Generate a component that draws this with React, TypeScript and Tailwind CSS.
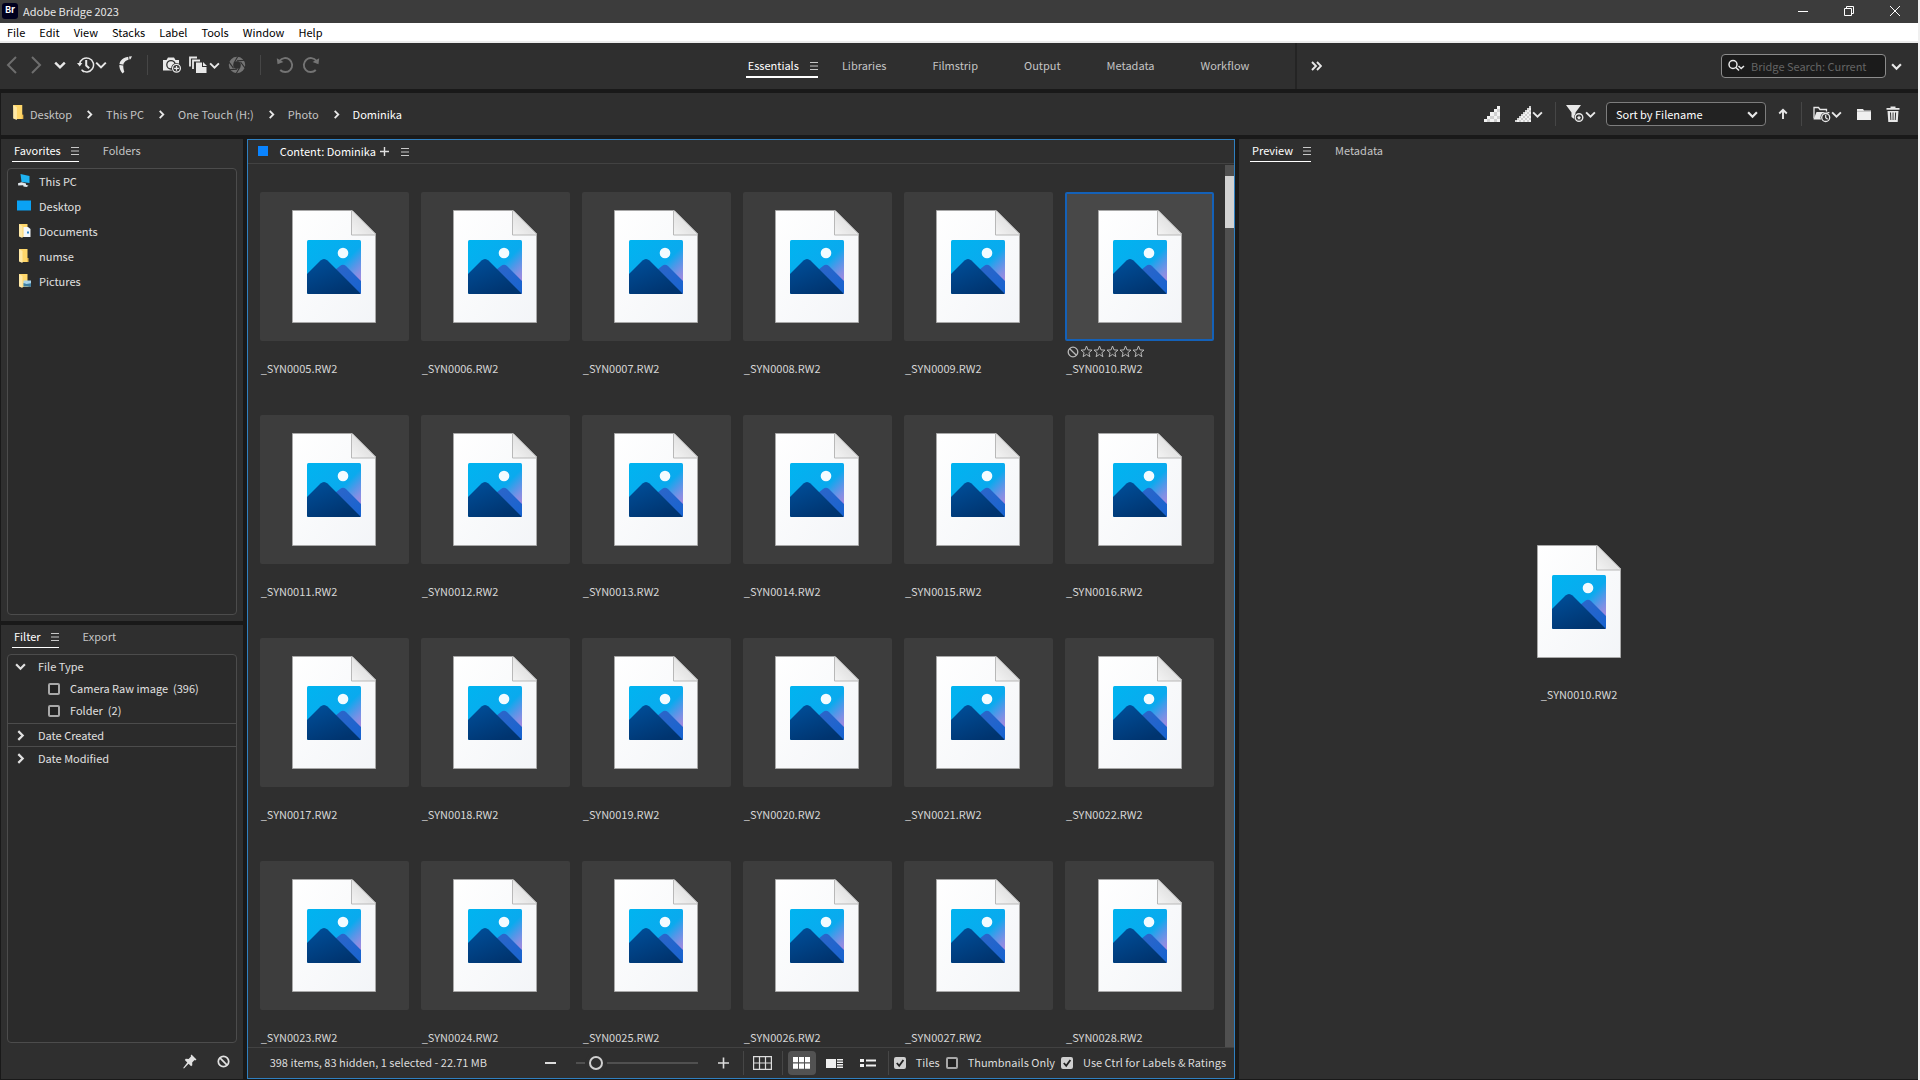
import { useState, type ReactNode } from 'react';

const FIRST_FILE = 5;
const FILES = Array.from({ length: 24 }, (_, i) => `_SYN${String(FIRST_FILE + i).padStart(4, '0')}.RW2`);
const MENUS = ['File', 'Edit', 'View', 'Stacks', 'Label', 'Tools', 'Window', 'Help'];
const WORKSPACES = ['Libraries', 'Filmstrip', 'Output', 'Metadata', 'Workflow'];
const CRUMBS = ['Desktop', 'This PC', 'One Touch (H:)', 'Photo', 'Dominika'];

/* ---------- icons ---------- */

type Dir = 'left' | 'right' | 'down';

function Chevron({ dir = 'down', size = 10, weight = 2 }: { dir?: Dir; size?: number; weight?: number }) {
  const d = { down: 'M1 3l4 4 4-4', right: 'M3 1l4 4-4 4', left: 'M7 1L3 5l4 4' }[dir];
  return (
    <svg width={size} height={size} viewBox="0 0 10 10" fill="none" stroke="currentColor" strokeWidth={weight} className="shrink-0" aria-hidden="true">
      <path d={d} />
    </svg>
  );
}

function BigChevron({ dir }: { dir: 'left' | 'right' }) {
  return (
    <svg width="12" height="18" viewBox="0 0 12 18" fill="none" stroke="currentColor" strokeWidth="2" aria-hidden="true">
      <path d={dir === 'left' ? 'M10 1L2 9l8 8' : 'M2 1l8 8-8 8'} />
    </svg>
  );
}

function Lines() {
  return (
    <svg width="8" height="8" viewBox="0 0 8 8" fill="#c8c8c8" className="shrink-0" aria-hidden="true">
      <path d="M0 0h8v1H0zM0 3.5h8v1H0zM0 7h8v1H0z" />
    </svg>
  );
}

function Ban({ size = 12, weight = 1.6 }: { size?: number; weight?: number }) {
  return (
    <svg width={size} height={size} viewBox="0 0 12 12" fill="none" stroke="currentColor" strokeWidth={weight} aria-hidden="true">
      <circle cx="6" cy="6" r="4.8" />
      <path d="M2.7 2.7l6.6 6.6" />
    </svg>
  );
}

function Star() {
  return (
    <svg width="13" height="13" viewBox="0 0 13 13" fill="none" stroke="currentColor" strokeWidth="1" aria-hidden="true">
      <path d="M6.5 1l1.5 3.9 4 .2-3.1 2.6 1 4-3.4-2.3-3.4 2.3 1-4L1 5.1l4-.2z" />
    </svg>
  );
}

function HistoryIcon() {
  return (
    <svg width="18" height="18" viewBox="0 0 18 18" fill="none" stroke="currentColor" strokeWidth="1.5" aria-hidden="true">
      <path d="M2.6 8A7 7 0 1 1 4.5 13.8" />
      <path d="M5.5 15a7 7 0 0 0 1.5.8" />
      <path d="M0 7h5.4L2.7 10.4z" fill="currentColor" stroke="none" />
      <path d="M9.2 4v5.5l3 2.8" strokeWidth="2" />
    </svg>
  );
}

function BoomerangIcon() {
  return (
    <svg width="16" height="18" viewBox="0 0 16 18" fill="currentColor" aria-hidden="true">
      <path d="M2.500 7.500C4 3 8 .8 15 .3l-1.500 2.900C9.500 3.800 6.800 5.600 6.300 9c-.2 2.600.3 4.700 1 6.800L5.600 17.600C3.400 14.800 1.700 11.500 2.500 7.500z" />
      <path d="M11.500 0l.7 4.500M1.700 8.300l5 .9" stroke="#2f2f2f" strokeWidth=".9" />
    </svg>
  );
}

function CameraPlusIcon() {
  return (
    <svg width="20" height="18" viewBox="0 0 20 18" aria-hidden="true">
      <path d="M1 4h3.5l1.5-2.5h6L13.500 4H17v10.500H1z" fill="currentColor" />
      <circle cx="9" cy="8.800" r="4.200" fill="currentColor" stroke="#2f2f2f" strokeWidth="1.3" />
      <circle cx="14.500" cy="12.300" r="5.300" fill="#2f2f2f" />
      <circle cx="14.500" cy="12.300" r="3.900" fill="#2f2f2f" stroke="currentColor" strokeWidth="1.3" />
      <path d="M14.500 9.900v4.800M12.100 12.300h4.800" stroke="currentColor" strokeWidth="1.3" />
    </svg>
  );
}

function StackIcon() {
  return (
    <svg width="18" height="18" viewBox="0 0 18 18" aria-hidden="true">
      <path d="M1 10.500V1.500h7M4 13V4.500h7" fill="none" stroke="currentColor" strokeWidth="1.8" />
      <path d="M7 6.500h6V11h4.500v6H7z" fill="currentColor" />
      <path d="M14 6l4 4h-4z" fill="currentColor" />
    </svg>
  );
}

function ApertureIcon() {
  return (
    <svg width="18" height="18" viewBox="0 0 18 18" aria-hidden="true">
      <circle cx="9" cy="9" r="6" fill="none" stroke="currentColor" strokeWidth="4.400" />
      <path d="M9.800.5L6 7M16.600 4.200L9 4.900M17 11.800L12.500 6M8.200 17.500L12 11M1.500 13.800l7.500-.7M1 6.200l4.500 6" stroke="#2f2f2f" strokeWidth="1.100" />
    </svg>
  );
}

function RotateIcon({ flip = false }: { flip?: boolean }) {
  return (
    <svg width="18" height="18" viewBox="0 0 18 18" fill="none" stroke="currentColor" strokeWidth="1.9" aria-hidden="true">
      <g transform={flip ? 'translate(18 0) scale(-1 1)' : undefined}>
        <path d="M3.600 4.800A7 7 0 1 1 4.200 14" />
        <path d="M.8 2.200l6.700 3.700L1.500 8.300z" fill="currentColor" stroke="none" />
      </g>
    </svg>
  );
}

function StairsIcon({ fine = false }: { fine?: boolean }) {
  const n = fine ? 8 : 5;
  const s = 15 / n;
  const cells: ReactNode[] = [];
  for (let r = 0; r < n; r++)
    for (let c = n - 1 - r; c < n; c++)
      cells.push(<rect key={`${r}-${c}`} x={c * s} y={r * s} width={s} height={s} fill={(r + c) % 2 ? '#cfcfcf' : '#f2f2f2'} />);
  return (
    <svg width="16" height="16" viewBox="0 0 15 15" shapeRendering="crispEdges" aria-hidden="true">
      {cells}
    </svg>
  );
}

function FunnelIcon() {
  return (
    <svg width="18" height="18" viewBox="0 0 18 18" aria-hidden="true">
      <path d="M0 0h15L9.500 7.500V15L5.500 12V7.500z" fill="currentColor" />
      <circle cx="13" cy="12.500" r="5" fill="#2f2f2f" />
      <circle cx="13" cy="12.500" r="3.800" fill="none" stroke="currentColor" strokeWidth="1.4" />
      <path d="M13 10.300l.7 1.500 1.600.2-1.200 1.100.3 1.600-1.400-.8-1.400.8.3-1.600-1.200-1.100 1.600-.2z" fill="currentColor" />
    </svg>
  );
}

function FolderClockIcon() {
  return (
    <svg width="18" height="17" viewBox="0 0 18 17" aria-hidden="true">
      <path d="M1 12.500V1.500h4.500l1.500 2h6.500v2" fill="none" stroke="currentColor" strokeWidth="1.3" />
      <path d="M.5 13.500L3.500 6h13l-2 7.500z" fill="currentColor" />
      <circle cx="12.700" cy="11.500" r="5.200" fill="#2f2f2f" />
      <circle cx="12.700" cy="11.500" r="4" fill="none" stroke="currentColor" strokeWidth="1.3" />
      <path d="M12.700 8.900v2.800l2 1.500" fill="none" stroke="currentColor" strokeWidth="1.2" />
    </svg>
  );
}

function TrashIcon() {
  return (
    <svg width="14" height="16" viewBox="0 0 14 16" fill="currentColor" aria-hidden="true">
      <path d="M4.500 2V.5h5V2h4v1.800H.5V2z" />
      <path d="M1.500 5h11l-.8 11H2.300zM4 6.500l.4 7.500h.9L5 6.500zm2.600 0V14h.9V6.500zm2.500 0L8.800 14h.9l.4-7.500z" fillRule="evenodd" />
    </svg>
  );
}

function YellowFolder({ children, size = 14 }: { children?: ReactNode; size?: number }) {
  return (
    <svg width={size} height={size} viewBox="0 0 14 14" aria-hidden="true">
      <path d="M2 0h8.500v13H4z" fill="#ffd76a" />
      <path d="M10 9h1.500v4H10z" fill="#f0bd4a" />
      <path d="M2 0l3.500 2v12L2 12.500z" fill="#ffe9a6" />
      {children}
    </svg>
  );
}

function PinIcon() {
  return (
    <svg width="14" height="15" viewBox="0 0 14 15" fill="currentColor" aria-hidden="true">
      <path d="M8.500.5l5 5-1.300.9-.7-.3-2.300 2.400.1 2.800-1.200 1-2.500-2.500L1 14.500l-.8-.6L4.300 8.500 1.800 6l1-1.200 2.800.1L8 2.600l-.3-.9z" />
    </svg>
  );
}

/* Document page with a picture badge, used for files without a rendered thumbnail. */
function ImageFileIcon() {
  return (
    <svg width="84" height="113" viewBox="0 0 84 113" role="img" aria-label="Image file">
      <defs>
        <linearGradient id="page" x1="0" y1="0" x2="1" y2="1">
          <stop offset="0" stopColor="#ffffff" />
          <stop offset="1" stopColor="#f3f5f8" />
        </linearGradient>
        <linearGradient id="fold" x1="0" y1="1" x2="1" y2="0">
          <stop offset="0" stopColor="#f4f4f4" />
          <stop offset="1" stopColor="#d2d2d2" />
        </linearGradient>
        <linearGradient id="sky" x1="0" y1="0" x2="1" y2="1">
          <stop offset="0" stopColor="#00b4f0" />
          <stop offset=".55" stopColor="#0aaaee" />
          <stop offset=".68" stopColor="#5596e8" />
          <stop offset=".77" stopColor="#8090e4" />
          <stop offset=".86" stopColor="#a08adf" />
        </linearGradient>
        <linearGradient id="near" x1="0" y1="0" x2=".6" y2="1">
          <stop offset="0" stopColor="#00509c" />
          <stop offset="1" stopColor="#00346f" />
        </linearGradient>
        <linearGradient id="far" x1="0" y1="0" x2="1" y2="1">
          <stop offset="0" stopColor="#2f66c8" />
          <stop offset="1" stopColor="#1763d0" />
        </linearGradient>
        <clipPath id="badge">
          <rect x="15" y="30" width="54" height="54" rx="1.5" />
        </clipPath>
      </defs>
      <path d="M.5.5H60L83.500 24v88.500H.5z" fill="url(#page)" stroke="#a8a8a8" />
      <path d="M60 .8V25h23z" fill="url(#fold)" />
      <path d="M59.500 1v24h24" fill="none" stroke="#b8b8b8" strokeWidth="1" />
      <path d="M60 .5L83.500 24" stroke="#d8d8d8" />
      <g clipPath="url(#badge)">
        <rect x="15" y="30" width="54" height="54" fill="url(#sky)" />
        <path d="M38 64L48 56q3-2.500 6 0L69 71v13H45z" fill="url(#far)" />
        <path d="M15 64L28.500 50.500q3.500-3 7 0L69 84H15z" fill="url(#near)" />
      </g>
      <circle cx="51" cy="43" r="5.300" fill="#f3fbff" />
    </svg>
  );
}

/* ---------- small building blocks ---------- */

function Divider({ className }: { className: string }) {
  return <span className={`w-px shrink-0 bg-[#464646] ${className}`} />;
}

function PanelTabs({ active, other }: { active: string; other: string }) {
  return (
    <div role="tablist" className="flex h-[23px] shrink-0 items-stretch pl-[11px]">
      <div className="flex items-center gap-2.5 border-b border-white pl-0.5">
        <button type="button" role="tab" aria-selected="true" className="text-white">{active}</button>
        <button type="button" aria-label={`${active} panel menu`} className="pt-0.5"><Lines /></button>
      </div>
      <button type="button" role="tab" aria-selected="false" className="ml-6 border-b border-transparent text-[#c4c4c4]">{other}</button>
    </div>
  );
}

function Check({ label, checked = false }: { label: ReactNode; checked?: boolean }) {
  const [on, setOn] = useState(checked);
  return (
    <label className="flex items-center gap-2.5 whitespace-nowrap">
      <span className="grid size-3 shrink-0 place-items-center">
        <input
          type="checkbox"
          checked={on}
          onChange={(e) => setOn(e.target.checked)}
          className="peer size-3 appearance-none rounded-[2px] border-2 border-[#a8a8a8] bg-[#222222] [grid-area:1/1] checked:border-[#d0d0d0] checked:bg-[#d0d0d0]"
        />
        <svg width="10" height="10" viewBox="0 0 10 10" fill="none" stroke="#222222" strokeWidth="1.8" className="pointer-events-none hidden [grid-area:1/1] peer-checked:block" aria-hidden="true">
          <path d="M1.800 5l2.400 2.800L8.400 2" />
        </svg>
      </span>
      <span className="pb-0.5 whitespace-pre">{label}</span>
    </label>
  );
}

/* ---------- page sections ---------- */

function TitleBar() {
  return (
    <header className="flex h-[23px] shrink-0 items-center bg-[#3c3c3c] pb-0.5 pl-0.5 text-[#e6e6e6]">
      <span className="flex size-4 items-center justify-center rounded-[3px] bg-[#00001e] pb-px text-[9px] leading-4 font-bold text-white">Br</span>
      <h1 className="ml-[5px]">Adobe Bridge 2023</h1>
      <div className="ml-auto flex items-center gap-9 pr-[18px] text-white">
        <button type="button" aria-label="Minimize">
          <svg width="10" height="10" viewBox="0 0 10 10" stroke="currentColor"><path d="M0 5.500h10" /></svg>
        </button>
        <button type="button" aria-label="Restore">
          <svg width="10" height="10" viewBox="0 0 10 10" fill="none" stroke="currentColor"><path d="M.5 2.500h7v7h-7zM2.500 2.500v-2h7v7h-2" /></svg>
        </button>
        <button type="button" aria-label="Close">
          <svg width="10" height="10" viewBox="0 0 10 10" stroke="currentColor"><path d="M0 0l10 10M10 0L0 10" /></svg>
        </button>
      </div>
    </header>
  );
}

function MenuBar() {
  return (
    <nav className="flex h-5 shrink-0 items-center gap-3.5 border-b-2 border-[#ececec] bg-white pl-[7px] text-black">
      {MENUS.map((m) => (
        <button key={m} type="button">{m}</button>
      ))}
    </nav>
  );
}

function Toolbar() {
  return (
    <div className="flex h-[46px] shrink-0 items-center bg-[#2f2f2f] text-[#e8e8e8]">
      <div className="flex flex-[742] items-center pb-0.5 pl-1.5">
        <button type="button" aria-label="Back" className="text-[#6e6e6e]"><BigChevron dir="left" /></button>
        <button type="button" aria-label="Forward" className="ml-3 text-[#6e6e6e]"><BigChevron dir="right" /></button>
        <button type="button" aria-label="Go to parent" className="ml-3"><Chevron size={12} /></button>
        <button type="button" aria-label="Recent files" className="ml-[11px] flex items-center"><HistoryIcon /><Chevron size={12} weight={1.7} /></button>
        <button type="button" aria-label="Return to application" className="ml-2.5"><BoomerangIcon /></button>
        <Divider className="ml-3.5 h-5" />
        <button type="button" aria-label="Get photos from camera" className="ml-3.5"><CameraPlusIcon /></button>
        <button type="button" aria-label="Refine" className="ml-[7px] flex items-center gap-0.5"><StackIcon /><Chevron size={11} weight={1.7} /></button>
        <button type="button" aria-label="Open in Camera Raw" className="ml-2 text-[#747474]"><ApertureIcon /></button>
        <Divider className="ml-3.5 h-5" />
        <button type="button" aria-label="Rotate left" className="ml-[15px] text-[#747474]"><RotateIcon /></button>
        <button type="button" aria-label="Rotate right" className="ml-2 text-[#747474]"><RotateIcon flip /></button>
      </div>
      <div className="flex flex-[1176] items-center self-stretch">
        <div role="tablist" className="flex items-center">
          <div className="flex h-6 items-center gap-[11px] border-b-2 border-white pl-0.5">
            <button type="button" role="tab" aria-selected="true" className="text-white">Essentials</button>
            <button type="button" aria-label="Workspace menu" className="pt-0.5"><Lines /></button>
          </div>
          <div className="ml-6 flex h-6 gap-[46px] border-b-2 border-transparent text-[#c4c4c4]">
            {WORKSPACES.map((w) => (
              <button key={w} type="button" role="tab" aria-selected="false">{w}</button>
            ))}
          </div>
        </div>
        <span className="ml-[46px] w-0.5 self-stretch bg-[#242424]" />
        <button type="button" aria-label="More workspaces" className="ml-3.5">
          <svg width="11" height="10" viewBox="0 0 11 10" fill="none" stroke="currentColor" strokeWidth="1.9"><path d="M1 1l4 4-4 4M6 1l4 4-4 4" /></svg>
        </button>
        <div className="ml-auto flex h-6 w-[165px] items-center gap-1.5 rounded-[4px] border border-[#8c8c8c] bg-[#1b1b1b] px-1.5">
          <svg width="17" height="14" viewBox="0 0 17 14" fill="none" stroke="currentColor" strokeWidth="1.5" className="shrink-0" aria-hidden="true">
            <circle cx="5" cy="5.500" r="4" />
            <path d="M8 8.500l3 3M10.500 7l2.700 2.500L16 7" />
          </svg>
          <input aria-label="Bridge search" placeholder="Bridge Search: Current" className="w-0 min-w-0 flex-1 bg-transparent leading-5 outline-none placeholder:text-[#646464]" />
        </div>
        <button type="button" aria-label="Search scope" className="mr-4 ml-[5px]"><Chevron size={11} /></button>
      </div>
    </div>
  );
}

function PathBar() {
  return (
    <div className="ml-px flex h-[42px] shrink-0 items-center bg-[#2f2f2f] pl-2.5 text-[#e8e8e8]">
      <span className="pb-1"><YellowFolder size={15} /></span>
      <nav aria-label="Path" className="ml-1 flex items-center gap-[13px]">
        {CRUMBS.map((c, i) => (
          <span key={c} className="flex items-center gap-3">
            {i > 0 && <Chevron dir="right" size={9} />}
            <a href="#" className={i === CRUMBS.length - 1 ? 'text-white' : 'text-[#c4c4c4]'}>{c}</a>
          </span>
        ))}
      </nav>
      <div className="ml-auto flex items-center pr-[18px]">
        <button type="button" aria-label="Prefer embedded images"><StairsIcon /></button>
        <button type="button" aria-label="Thumbnail quality" className="ml-[15px] flex items-center gap-px"><StairsIcon fine /><Chevron size={11} weight={1.7} /></button>
        <Divider className="ml-3 h-6" />
        <button type="button" aria-label="Filter by rating" className="ml-2.5 flex items-center gap-px"><FunnelIcon /><Chevron size={11} weight={1.7} /></button>
        <div className="ml-2.5 grid items-center">
          <select aria-label="Sort" className="h-6 w-40 appearance-none rounded-[4px] border border-[#7d7d7d] bg-[#222222] pr-7 pl-[9px] leading-5 text-white [grid-area:1/1]">
            <option>Sort by Filename</option>
          </select>
          <span className="pointer-events-none mr-2 justify-self-end [grid-area:1/1]"><Chevron size={11} /></span>
        </div>
        <button type="button" aria-label="Ascending order" className="ml-3">
          <svg width="10" height="12" viewBox="0 0 10 12" fill="none" stroke="currentColor" strokeWidth="1.9"><path d="M5 11V2M1.200 5.500L5 1.800l3.800 3.700" /></svg>
        </button>
        <Divider className="ml-[13px] h-6" />
        <button type="button" aria-label="Open recent" className="ml-[11px] flex items-center"><FolderClockIcon /><Chevron size={11} weight={1.7} /></button>
        <button type="button" aria-label="New folder" className="ml-[15px]">
          <svg width="14" height="12" viewBox="0 0 14 12" fill="#f0f0f0"><path d="M0 1h6l1 1.500h7V12H0z" /><path d="M0 3.300h14" stroke="#9a9a9a" strokeWidth=".6" /></svg>
        </button>
        <button type="button" aria-label="Delete" className="ml-[15px]"><TrashIcon /></button>
      </div>
    </div>
  );
}

const FAVORITES: { name: string; icon: ReactNode }[] = [
  {
    name: 'This PC',
    icon: (
      <svg width="14" height="14" viewBox="0 0 14 14" aria-hidden="true">
        <path d="M3.500 0l9 2v7l-8-1z" fill="#1fb3f2" />
        <path d="M1 9.300l3.500-1 4.500 1.200v1.200l2.500 1-2 1.300-3-.6-.3-1.200-5 .2z" fill="#dfe7ec" />
      </svg>
    ),
  },
  {
    name: 'Desktop',
    icon: (
      <svg width="14" height="14" viewBox="0 0 14 14" aria-hidden="true">
        <path d="M0 1.500h14v10H0z" fill="#0aa2f5" />
      </svg>
    ),
  },
  {
    name: 'Documents',
    icon: (
      <YellowFolder>
        <path d="M6.500 3h4.500l2.500 2v8h-7z" fill="#f4f8fb" />
        <path d="M10 7.500h2v2h-2z" fill="#2f88c9" />
      </YellowFolder>
    ),
  },
  { name: 'numse', icon: <YellowFolder /> },
  {
    name: 'Pictures',
    icon: (
      <YellowFolder>
        <path d="M6.500 6.500H14v6H6.500z" fill="#a8d4ea" />
        <path d="M6.500 9l3 1 4.500-.8v3.300H6.500z" fill="#3f7fa0" />
      </YellowFolder>
    ),
  },
];

function FavoritesPanel() {
  return (
    <section className="flex min-h-0 flex-[483] flex-col bg-[#2f2f2f]">
      <PanelTabs active="Favorites" other="Folders" />
      <ul className="mx-1.5 mt-[6px] mb-1.5 flex-1 rounded-[4px] border border-[#4c4c4c] bg-[#2b2b2b]">
        {FAVORITES.map((f) => (
          <li key={f.name}>
            <button type="button" className="flex h-[25px] w-full items-center gap-2 pb-px pl-[9px] text-[#e0e0e0]">
              {f.icon}
              <span className="pb-px">{f.name}</span>
            </button>
          </li>
        ))}
      </ul>
    </section>
  );
}

function FilterPanel() {
  return (
    <section className="flex min-h-0 flex-[454] flex-col bg-[#2f2f2f]">
      <PanelTabs active="Filter" other="Export" />
      <div className="mx-1.5 mt-[6px] flex-1 rounded-[4px] border border-[#4c4c4c] bg-[#2b2b2b] text-[#e0e0e0]">
        <div className="border-b border-[#4c4c4c]">
          <button type="button" aria-expanded="true" className="flex h-6 w-full items-center gap-3 pb-px pl-[7px]">
            <Chevron size={11} /> <span className="pb-px">File Type</span>
          </button>
          <div className="flex flex-col pl-10">
            <div className="flex h-5 items-center"><Check label="Camera Raw image  (396)" /></div>
            <div className="flex h-6 items-center"><Check label="Folder  (2)" /></div>
          </div>
        </div>
        <button type="button" aria-expanded="false" className="flex h-[23px] w-full items-center gap-3 border-b border-[#4c4c4c] pl-[7px]">
          <Chevron dir="right" size={11} /> <span className="pb-px">Date Created</span>
        </button>
        <button type="button" aria-expanded="false" className="flex h-[23px] w-full items-center gap-3 pl-[7px]">
          <Chevron dir="right" size={11} /> <span className="pb-px">Date Modified</span>
        </button>
      </div>
      <div className="flex h-9 shrink-0 items-center justify-end gap-5 pr-[13px] text-[#e0e0e0]">
        <button type="button" aria-label="Keep filter"><PinIcon /></button>
        <button type="button" aria-label="Clear filter"><Ban size={13} /></button>
      </div>
    </section>
  );
}

function Tile({ name, selected, onSelect }: { name: string; selected: boolean; onSelect: () => void }) {
  return (
    <li className="min-w-0">
      <button
        type="button"
        aria-pressed={selected}
        aria-label={name}
        onClick={onSelect}
        className={`flex aspect-square w-full items-center justify-center rounded-[2px] ${selected ? 'border-2 border-[#1461b8] bg-[#484848]' : 'bg-[#3d3d3d]'}`}
      >
        <ImageFileIcon />
      </button>
      <div className="flex h-[19px] items-center gap-px pt-0.5 pl-0.5 text-[#b8b8b8]">
        {selected && (
          <>
            <Ban size={12} weight={1.3} />
            <span className="flex">{[1, 2, 3, 4, 5].map((n) => <Star key={n} />)}</span>
          </>
        )}
      </div>
      <p className="truncate pl-px leading-4 text-[#d6d6d6]">{name}</p>
    </li>
  );
}

function StatusBar() {
  const [zoom, setZoom] = useState(12);
  return (
    <footer className="flex h-[31px] shrink-0 items-center border-t border-[#424242] pr-2 pl-[22px] text-[#dcdcdc]">
      <p className="flex-1 pb-0.5 whitespace-nowrap">398 items, 83 hidden, 1 selected - 22.71 MB</p>
      <button type="button" aria-label="Smaller thumbnails"><svg width="11" height="12" viewBox="0 0 11 12" stroke="currentColor" strokeWidth="2"><path d="M0 6h11" /></svg></button>
      <input
        type="range"
        aria-label="Thumbnail size"
        value={zoom}
        onChange={(e) => setZoom(Number(e.target.value))}
        className="ml-5 h-4 w-[122px] appearance-none bg-transparent [&::-webkit-slider-runnable-track]:h-0.5 [&::-webkit-slider-runnable-track]:bg-[#505050] [&::-webkit-slider-thumb]:-mt-1.5 [&::-webkit-slider-thumb]:size-3.5 [&::-webkit-slider-thumb]:appearance-none [&::-webkit-slider-thumb]:rounded-full [&::-webkit-slider-thumb]:border-2 [&::-webkit-slider-thumb]:border-[#d0d0d0] [&::-webkit-slider-thumb]:bg-[#2f2f2f] [&::-webkit-slider-thumb]:ring-4 [&::-webkit-slider-thumb]:ring-[#2f2f2f]"
      />
      <button type="button" aria-label="Larger thumbnails" className="ml-5"><svg width="11" height="12" viewBox="0 0 11 12" stroke="currentColor" strokeWidth="1.6"><path d="M0 6h11M5.500.5v11" /></svg></button>
      <Divider className="ml-3.5 h-6" />
      <button type="button" aria-label="Lock grid" className="ml-[9px]">
        <svg width="19" height="14" viewBox="0 0 19 14" fill="none" stroke="currentColor" strokeWidth="1.2"><path d="M.6.6h17.800v12.800H.6zM6.500.6v12.800M12.500.6v12.800M.6 7h17.800" /></svg>
      </button>
      <Divider className="ml-2.5 h-6" />
      <button type="button" aria-label="View as thumbnails" aria-pressed="true" className="ml-[5px] flex h-6 w-7 items-center justify-center rounded-[4px] bg-[#525252]">
        <svg width="17" height="12" viewBox="0 0 17 12" fill="#ffffff"><path d="M0 0h5v5.300H0zM6 0h5v5.300H6zM12 0h5v5.300h-5zM0 6.500h5v5.300H0zM6 6.500h5v5.300H6zM12 6.500h5v5.300h-5z" /></svg>
      </button>
      <button type="button" aria-label="View as details" className="ml-2.5"><svg width="17" height="11" viewBox="0 0 17 11" fill="#f0f0f0"><path d="M0 1h10v9H0zM11 1h6v1.500h-6zM11 3.500h6V5h-6zM11 6h6v1.500h-6zM11 8.500h6V10h-6z" /></svg></button>
      <button type="button" aria-label="View as list" className="ml-[17px]"><svg width="16" height="10" viewBox="0 0 16 10" fill="#f0f0f0"><path d="M0 1h4v3H0zM0 6h4v3H0zM6 1.500h10v2H6zM6 6.500h10v2H6z" /></svg></button>
      <Divider className="mr-[5px] ml-3 h-6" />
      <div className="flex gap-1.5">
        <Check label="Tiles" checked />
        <Check label="Thumbnails Only" />
        <Check label="Use Ctrl for Labels & Ratings" checked />
      </div>
    </footer>
  );
}

function ContentPanel({ selected, onSelect }: { selected: string; onSelect: (f: string) => void }) {
  return (
    <main className="flex min-h-0 min-w-0 flex-[988] flex-col border border-[#2f7fbf] bg-[#2f2f2f]">
      <div className="flex h-6 shrink-0 items-center border-b border-[#424242] pb-px pl-2.5">
        <span className="size-2.5 bg-[#0a84ff]" />
        <h2 className="ml-3 pb-px text-white">Content: Dominika</h2>
        <button type="button" aria-label="Add tab" className="ml-1 pt-px"><svg width="9" height="9" viewBox="0 0 9 9" stroke="#e0e0e0" strokeWidth="1.4"><path d="M0 4.500h9M4.500 0v9" /></svg></button>
        <button type="button" aria-label="Content panel menu" className="ml-3 pt-px"><Lines /></button>
      </div>
      <div className="flex min-h-0 flex-1">
        <ul className="grid min-h-0 flex-1 grid-cols-6 content-start gap-x-3 gap-y-[39px] overflow-hidden pt-7 pr-[11px] pl-3">
          {FILES.map((f) => (
            <Tile key={f} name={f} selected={f === selected} onSelect={() => onSelect(f)} />
          ))}
        </ul>
        <div className="mt-px w-[9px] shrink-0 bg-[#505050] pt-[11px]">
          <div className="h-[52px] bg-[#d2d2d2]" />
        </div>
      </div>
      <StatusBar />
    </main>
  );
}

function PreviewPanel({ file }: { file: string }) {
  return (
    <aside className="flex min-h-0 flex-[680] flex-col bg-[#2f2f2f]">
      <PanelTabs active="Preview" other="Metadata" />
      <figure className="flex flex-1 flex-col items-center justify-center pt-2 pl-px">
        <ImageFileIcon />
        <figcaption className="mt-[26px] leading-5 text-[#d6d6d6]">{file}</figcaption>
      </figure>
    </aside>
  );
}

export default function App() {
  const [selected, setSelected] = useState('_SYN0010.RW2');
  return (
    <div className="h-screen bg-[#f0f0f0] pr-0.5 font-['Noto_Sans_CJK_SC','Noto_Sans',sans-serif] text-[11px] leading-4">
      <div className="flex h-full flex-col bg-[#191919]">
        <TitleBar />
        <MenuBar />
        <Toolbar />
        <div className="h-1 shrink-0" />
        <PathBar />
        <div className="flex min-h-0 flex-1 gap-1 pt-1 pb-px pl-px">
          <div className="flex min-h-0 flex-[242] flex-col gap-1">
            <FavoritesPanel />
            <FilterPanel />
          </div>
          <ContentPanel selected={selected} onSelect={setSelected} />
          <PreviewPanel file={selected} />
        </div>
      </div>
    </div>
  );
}
